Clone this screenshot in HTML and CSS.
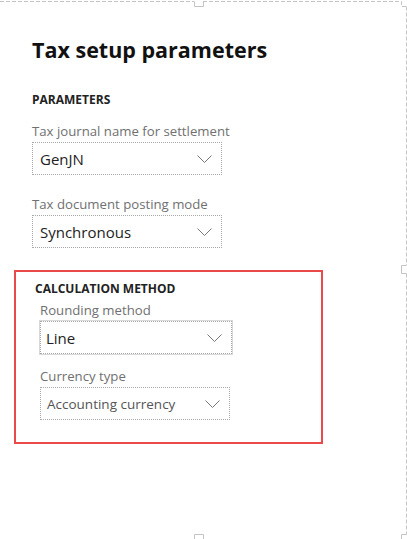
FILE: index.html
```html
<!DOCTYPE html>
<html>
<head>
<meta charset="utf-8">
<link rel="stylesheet" href="styles.css">
</head>
<body>
<div class="page">
  <h1 class="title">Tax setup parameters</h1>
  <section class="group">
    <h2 class="group-head">PARAMETERS</h2>
    <div class="field">
      <div class="label">Tax journal name for settlement</div>
      <div class="select"><span class="value">GenJN</span><svg class="chev" width="15" height="8" viewBox="0 0 15 8"><path d="M0.5 0.5 L7.5 7.5 L14.5 0.5" fill="none" stroke="#777" stroke-width="1"/></svg></div>
    </div>
    <div class="field">
      <div class="label">Tax document posting mode</div>
      <div class="select"><span class="value">Synchronous</span><svg class="chev" width="15" height="8" viewBox="0 0 15 8"><path d="M0.5 0.5 L7.5 7.5 L14.5 0.5" fill="none" stroke="#777" stroke-width="1"/></svg></div>
    </div>
  </section>
  <section class="calc">
    <h2 class="group-head">CALCULATION METHOD</h2>
    <div class="calc-fields">
      <div class="field">
        <div class="label">Rounding method</div>
        <div class="select select-focus"><span class="value">Line</span><svg class="chev" width="15" height="8" viewBox="0 0 15 8"><path d="M0.5 0.5 L7.5 7.5 L14.5 0.5" fill="none" stroke="#777" stroke-width="1"/></svg></div>
      </div>
      <div class="field">
        <div class="label">Currency type</div>
        <div class="select select-small"><span class="value value-small">Accounting currency</span><svg class="chev" width="15" height="8" viewBox="0 0 15 8"><path d="M0.5 0.5 L7.5 7.5 L14.5 0.5" fill="none" stroke="#777" stroke-width="1"/></svg></div>
      </div>
    </div>
  </section>
</div>
<svg class="frame" width="407" height="539" viewBox="0 0 407 539">
  <g fill="none" stroke="#c4c4c4" stroke-width="1">
    <path d="M0 1.5 H194" stroke-dasharray="4 2"/>
    <path d="M203 1.5 H401.5 V6.5 H406.5" stroke-dasharray="4 2"/>
    <path d="M194.5 1.5 V6.5 H203.5 V1.5"/>
    <path d="M406.5 6.5 V265.5" stroke-dasharray="4 2"/>
    <path d="M406.5 265.5 H401.5 V273.5 H406.5"/>
    <path d="M406.5 273.5 V534.5" stroke-dasharray="4 2"/>
    <path d="M406.5 534.5 H401.5 V539"/>
    <path d="M194.5 539 V534.5 H203.5 V539"/>
  </g>
</svg>
</body>
</html>
```
FILE: styles.css
```css
html, body {
  margin: 0;
  padding: 0;
  background: #fff;
}
body {
  width: 407px;
  height: 539px;
  overflow: hidden;
  font-family: "Open Sans", "Noto Sans", sans-serif;
  color: #222;
}
.page {
  display: flex;
  flex-direction: column;
  padding: 36px 0 0 14px;
}
.title {
  margin: 0 0 0 18px;
  font-size: 21.5px;
  line-height: 28px;
  font-weight: 700;
  color: #111;
}
.group {
  display: flex;
  flex-direction: column;
  padding-left: 18px;
  margin-top: 28px;
}
.group-head {
  margin: 0;
  font-size: 12px;
  line-height: 15px;
  font-weight: 700;
  color: #222;
}
.field {
  display: flex;
  flex-direction: column;
}
.group .field:first-of-type {
  margin-top: 15px;
}
.group .field + .field {
  margin-top: 20px;
}
.label {
  font-size: 13.2px;
  line-height: 18px;
  color: #707070;
}
.select {
  box-sizing: border-box;
  width: 190px;
  height: 33px;
  margin-top: 2px;
  border: 1px dotted #a8a8a8;
  display: flex;
  align-items: center;
  justify-content: space-between;
  padding: 0 9px 0 7px;
}
.value {
  font-size: 15px;
  color: #222;
}
.value-small {
  font-size: 13.5px;
  color: #555;
}
.select-small {
  padding-left: 6px;
}
.chev {
  display: block;
}
.calc {
  position: relative;
  box-sizing: border-box;
  width: 309px;
  height: 174px;
  margin-top: 22px;
  border: 2px solid #ea4a4a;
  padding: 9px 0 0 19px;
}
.calc::after {
  content: "";
  position: absolute;
  left: -3px;
  top: 8px;
  right: 8px;
  bottom: -4px;
  border-left: 1px dotted #b0b0b0;
  border-bottom: 1px dotted #b0b0b0;
  z-index: -1;
}
.calc-fields {
  display: flex;
  flex-direction: column;
  padding-left: 5px;
}
.calc .field:first-child {
  margin-top: 5px;
}
.calc .field + .field {
  margin-top: 13px;
}
.select-focus {
  width: 192px;
  padding-left: 5px;
  box-shadow: 0 0 0 1px #d8d8d8;
}
.frame {
  position: absolute;
  left: 0;
  top: 0;
  pointer-events: none;
}
```
